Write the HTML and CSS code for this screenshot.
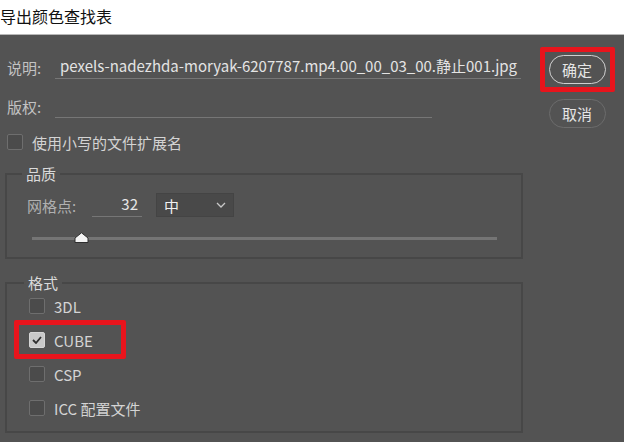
FILE: index.html
```html
<!DOCTYPE html>
<html lang="zh-CN">
<head>
    <meta charset="UTF-8">
    <title>导出颜色查找表</title>
    <link rel="stylesheet" href="styles.css">
</head>
<body>
    <div class="titlebar">导出颜色查找表</div>

    <div class="dialog">
        <div class="main">
            <div class="field-row">
                <span class="label">说明:</span>
                <div class="text-input wide">pexels-nadezhda-moryak-6207787.mp4.00_00_03_00.静止001.jpg</div>
            </div>
            <div class="field-row second">
                <span class="label">版权:</span>
                <div class="text-input short"></div>
            </div>
            <label class="check-row lower">
                <span class="box"></span>
                <span>使用小写的文件扩展名</span>
            </label>

            <fieldset class="group quality">
                <legend>品质</legend>
                <div class="grid-row">
                    <span class="label dim">网格点:</span>
                    <div class="num-input">32</div>
                    <div class="select">
                        <span>中</span>
                        <svg width="10" height="6" viewBox="0 0 10 6"><path d="M1 1 L5 5 L9 1" fill="none" stroke="#c8c8c8" stroke-width="1.3"/></svg>
                    </div>
                </div>
                <div class="slider">
                    <div class="track"></div>
                    <svg class="thumb" width="15" height="11" viewBox="0 0 15 11"><path d="M1 10.5 L1 6 L7.5 0.8 L14 6 L14 10.5 Z" fill="#f4f4f4" stroke="#2e2e2e" stroke-width="1"/></svg>
                </div>
            </fieldset>

            <fieldset class="group format">
                <legend>格式</legend>
                <label class="check-row"><span class="box"></span><span>3DL</span></label>
                <label class="check-row"><span class="box checked"><svg width="10" height="8" viewBox="0 0 10 8"><path d="M1 4 L4 7 L9 1" fill="none" stroke="#2f2f2f" stroke-width="1.8"/></svg></span><span>CUBE</span></label>
                <label class="check-row"><span class="box"></span><span>CSP</span></label>
                <label class="check-row"><span class="box"></span><span>ICC 配置文件</span></label>
                <div class="mark cube-mark"></div>
            </fieldset>
        </div>

        <div class="buttons">
            <div class="mark-box">
                <button class="btn primary">确定</button>
            </div>
            <button class="btn">取消</button>
        </div>
    </div>
</body>
</html>
```

FILE: styles.css
```css
body {
    margin: 0;
    background-color: #535353;
    font-family: "Noto Sans CJK SC", "Noto Sans", sans-serif;
    font-size: 15px;
    color: #d4d4d4;
}

.titlebar {
    height: 34px;
    line-height: 32px;
    background-color: #fff;
    color: #111;
    font-size: 16px;
    border-bottom: 1px solid #b8b8b8;
}

.dialog {
    display: flex;
    height: 407px;
}

.main {
    width: 518px;
    padding-left: 5px;
    padding-top: 20px;
}

.field-row {
    display: flex;
    align-items: center;
    height: 24px;
    padding-left: 2px;
}
.field-row.second {
    margin-top: 15px;
}

.label {
    width: 48px;
    color: #c2c2c2;
}
.label.dim {
    width: 65px;
    color: #b0b0b0;
}

.text-input {
    height: 23px;
    line-height: 21px;
    border-bottom: 1px solid #767676;
    padding-left: 5px;
    color: #e4e4e4;
    white-space: nowrap;
}
.text-input.wide {
    width: 461px;
}
.text-input.short {
    width: 372px;
}

.check-row {
    display: flex;
    align-items: center;
    gap: 9px;
    height: 24px;
}
.check-row.lower {
    margin-top: 12px;
    padding-left: 2px;
}

.box {
    width: 14px;
    height: 14px;
    border: 1px solid #6e6e6e;
    border-radius: 2px;
    background-color: #4b4b4b;
    display: flex;
    align-items: center;
    justify-content: center;
}
.box.checked {
    background-color: #c9c9c9;
    border-color: #d6d6d6;
}

.group {
    position: relative;
    margin: 0;
    border: 2px solid #474747;
    padding: 0 0 0 20px;
}
.group legend {
    margin-left: -5px;
    padding: 0 4px;
    line-height: 20px;
    color: #dadada;
}

.quality {
    margin-top: 10px;
    height: 91px;
}

.grid-row {
    display: flex;
    align-items: center;
    margin-top: 9px;
    height: 24px;
}

.num-input {
    width: 46px;
    height: 23px;
    line-height: 22px;
    border-bottom: 1px solid #767676;
    text-align: right;
    padding-right: 4px;
    color: #e6e6e6;
}

.select {
    margin-left: 14px;
    width: 62px;
    height: 22px;
    padding: 0 7px;
    border: 1px solid #444;
    background-color: #494949;
    display: flex;
    align-items: center;
    justify-content: space-between;
    color: #f0f0f0;
}

.slider {
    position: relative;
    margin: 15px 0 0 5px;
    width: 465px;
    height: 12px;
    display: flex;
    align-items: center;
}
.track {
    width: 100%;
    height: 3px;
    background-color: #757575;
}
.thumb {
    position: absolute;
    left: 42px;
    top: 0;
}

.format {
    margin-top: 14px;
    height: 156px;
    padding-left: 22px;
}
.format .check-row {
    height: 34px;
}
.format .check-row:first-of-type {
    margin-top: -4px;
}

.mark {
    position: absolute;
    border: 5px solid #e8141c;
    border-radius: 2px;
}
.cube-mark {
    left: 7px;
    top: 27px;
    width: 102px;
    height: 29px;
}

.buttons {
    margin-left: 17px;
    padding-top: 12px;
    display: flex;
    flex-direction: column;
    align-items: center;
    width: 74px;
}

.mark-box {
    border: 5px solid #e8141c;
    border-radius: 2px;
    padding: 3px 4px;
}

.btn {
    width: 57px;
    height: 29px;
    border-radius: 15px;
    border: 1.5px solid #6c6c6c;
    background-color: #535353;
    color: #e6e6e6;
    font-family: inherit;
    font-size: 15px;
    padding: 0;
    margin-top: 7px;
}
.mark-box .btn {
    margin-top: 0;
    border-color: #d0d0d0;
}
```
